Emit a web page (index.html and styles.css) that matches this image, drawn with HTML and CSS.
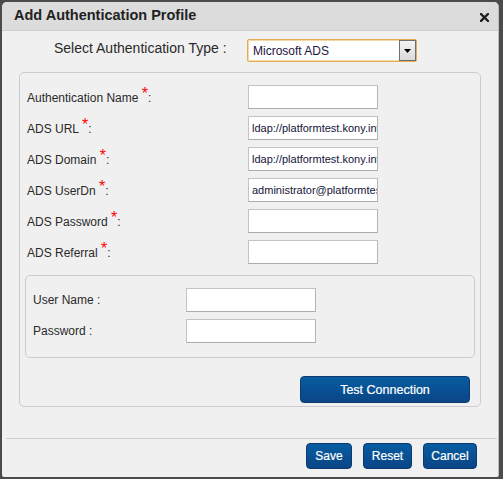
FILE: index.html
```html
<!DOCTYPE html>
<html>
<head>
<meta charset="utf-8">
<link rel="stylesheet" href="styles.css">
</head>
<body>
<div class="dialog">
  <div class="titlebar">
    <span class="title">Add Authentication Profile</span>
    <svg class="close" width="9" height="9" viewBox="0 0 9 9"><path d="M1 1 L8 8 M8 1 L1 8" stroke="#222" stroke-width="2.4" stroke-linecap="square"/></svg>
  </div>
  <div class="content">
    <div class="type-row">
      <span class="type-label">Select Authentication Type :</span>
      <div class="select">
        <span class="select-text">Microsoft ADS</span>
        <span class="select-btn"><svg width="7" height="4" viewBox="0 0 7 4"><path d="M0 0 H7 L3.5 4 Z" fill="#000"/></svg></span>
      </div>
    </div>
    <div class="fieldset">
      <div class="rows">
        <div class="row"><span class="label">Authentication Name <span class="req">*</span>:</span><span class="input"></span></div>
        <div class="row"><span class="label">ADS URL <span class="req">*</span>:</span><span class="input">ldap://platformtest.kony.inf</span></div>
        <div class="row"><span class="label">ADS Domain <span class="req">*</span>:</span><span class="input">ldap://platformtest.kony.inf</span></div>
        <div class="row"><span class="label">ADS UserDn <span class="req">*</span>:</span><span class="input">administrator@platformtest</span></div>
        <div class="row"><span class="label">ADS Password <span class="req">*</span>:</span><span class="input"></span></div>
        <div class="row"><span class="label">ADS Referral <span class="req">*</span>:</span><span class="input"></span></div>
      </div>
      <div class="inner">
        <div class="irow"><span class="ilabel">User Name :</span><span class="input"></span></div>
        <div class="irow"><span class="ilabel">Password :</span><span class="input"></span></div>
      </div>
      <div class="test-wrap"><button class="btn test">Test Connection</button></div>
    </div>
  </div>
  <div class="footer">
    <button class="btn save">Save</button>
    <button class="btn reset">Reset</button>
    <button class="btn cancel">Cancel</button>
  </div>
</div>
</body>
</html>
```
FILE: styles.css
```css
html, body {
  margin: 0;
  padding: 0;
}
body {
  background: #4b4b4b;
  width: 503px;
  height: 479px;
  overflow: hidden;
  font-family: "Liberation Sans", Arial, sans-serif;
  color: #222;
}
.dialog {
  margin: 2px 0 0 2px;
  width: 497px;
  height: 475px;
  background: #f0f0f0;
  border-radius: 5px 5px 2px 2px;
  box-sizing: border-box;
  border-right: 1px solid #bcbcbc;
  display: flex;
  flex-direction: column;
}
.titlebar {
  height: 29px;
  background: #dcdcdc;
  border-bottom: 1px solid #cfcfcf;
  border-radius: 5px 5px 0 0;
  display: flex;
  align-items: center;
  justify-content: space-between;
  padding: 0 9px 0 12px;
  box-sizing: border-box;
}
.title {
  font-weight: bold;
  font-size: 14.5px;
  color: #222;
  margin-top: -2px;
}
.close {
  margin-top: 2px;
}
.content {
  padding: 8px 17px 0 17px;
}
.type-row {
  display: flex;
  align-items: center;
  height: 23px;
}
.type-label {
  font-size: 14px;
  margin-left: 35px;
  width: 193px;
  margin-top: -5px;
  color: #2a2a2a;
}
.select {
  width: 170px;
  height: 23px;
  box-sizing: border-box;
  border: 1px solid #e3ad4f;
  box-shadow: 0 0 0 1px #f3d9a6 inset;
  border-radius: 2px;
  background: #fff;
  display: flex;
  align-items: center;
  justify-content: space-between;
  padding: 0 0 0 5px;
}
.select-text {
  font-size: 12px;
  color: #1e1440;
}
.select-btn {
  width: 17px;
  height: 21px;
  box-sizing: border-box;
  border: 1px solid #707070;
  background: linear-gradient(#f4f4f4, #d9d9d9);
  display: flex;
  align-items: center;
  justify-content: center;
}
.fieldset {
  margin-top: 10px;
  border: 1px solid #cccccc;
  border-radius: 5px;
  padding: 12px 5px 5px 5px;
  height: 335px;
  box-sizing: border-box;
}
.rows {
  display: flex;
  flex-direction: column;
  gap: 7px;
}
.row {
  display: flex;
  align-items: center;
  height: 24px;
}
.label {
  font-size: 12px;
  padding-left: 2px;
  width: 221px;
  margin-top: 1px;
  color: #2a2a2a;
}
.req {
  color: #ff0000;
  font-size: 16px;
  position: relative;
  top: -3px;
  line-height: 0;
}
.input {
  display: block;
  width: 130px;
  height: 24px;
  box-sizing: border-box;
  background: #fff;
  border: 1px solid #c3c3c3;
  border-bottom-color: #acacac;
  border-right-color: #b5b5b5;
  font-size: 11px;
  line-height: 22px;
  padding-left: 3px;
  white-space: nowrap;
  overflow: hidden;
  color: #14143a;
}
.inner {
  margin-top: 11px;
  border: 1px solid #cccccc;
  border-radius: 5px;
  padding: 12px 7px 14px 7px;
  display: flex;
  flex-direction: column;
  gap: 7px;
}
.irow {
  display: flex;
  align-items: center;
  height: 24px;
}
.ilabel {
  font-size: 12px;
  width: 153px;
  color: #2a2a2a;
}
.test-wrap {
  display: flex;
  justify-content: flex-end;
  margin-top: 18px;
  padding-right: 5px;
}
.btn {
  font-family: "Liberation Sans", Arial, sans-serif;
  font-size: 12px;
  color: #fff;
  border: 1px solid #0c3a6e;
  border-radius: 4px;
  background: linear-gradient(#075da0, #0a4587);
  padding: 0;
  height: 26px;
  cursor: pointer;
  -webkit-text-stroke: 0.2px #fff;
}
.test {
  width: 170px;
  height: 27px;
  font-size: 12.5px;
}
.footer {
  margin-top: 31px;
  border-top: 1px solid #cfcfcf;
  margin-left: 4px;
  margin-right: 1px;
  padding: 4px 20px 0 0;
  display: flex;
  justify-content: flex-end;
  gap: 11px;
}
.footer .btn {
  height: 26px;
}
.save { width: 46px; }
.reset { width: 49px; }
.cancel { width: 54px; }
```
